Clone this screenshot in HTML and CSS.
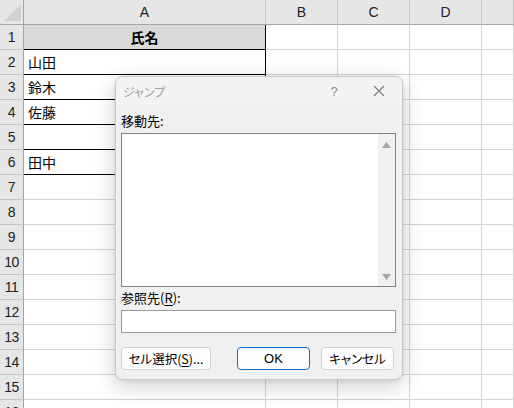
FILE: index.html
```html
<!DOCTYPE html>
<html lang="ja">
<head>
<meta charset="utf-8">
<title>ジャンプ</title>
<link rel="stylesheet" href="styles.css">
</head>
<body>
<div class="sheet">
  <div class="c h corner"></div><div class="c h">A</div><div class="c h">B</div><div class="c h">C</div><div class="c h">D</div><div class="c h"></div>
  <div class="c rh">1</div><div class="c t title-cell">氏名</div><div class="c"></div><div class="c"></div><div class="c"></div><div class="c"></div>
  <div class="c rh">2</div><div class="c t">山田</div><div class="c"></div><div class="c"></div><div class="c"></div><div class="c"></div>
  <div class="c rh">3</div><div class="c t">鈴木</div><div class="c"></div><div class="c"></div><div class="c"></div><div class="c"></div>
  <div class="c rh">4</div><div class="c t">佐藤</div><div class="c"></div><div class="c"></div><div class="c"></div><div class="c"></div>
  <div class="c rh">5</div><div class="c t"></div><div class="c"></div><div class="c"></div><div class="c"></div><div class="c"></div>
  <div class="c rh">6</div><div class="c t">田中</div><div class="c"></div><div class="c"></div><div class="c"></div><div class="c"></div>
  <div class="c rh">7</div><div class="c"></div><div class="c"></div><div class="c"></div><div class="c"></div><div class="c"></div>
  <div class="c rh">8</div><div class="c"></div><div class="c"></div><div class="c"></div><div class="c"></div><div class="c"></div>
  <div class="c rh">9</div><div class="c"></div><div class="c"></div><div class="c"></div><div class="c"></div><div class="c"></div>
  <div class="c rh">10</div><div class="c"></div><div class="c"></div><div class="c"></div><div class="c"></div><div class="c"></div>
  <div class="c rh">11</div><div class="c"></div><div class="c"></div><div class="c"></div><div class="c"></div><div class="c"></div>
  <div class="c rh">12</div><div class="c"></div><div class="c"></div><div class="c"></div><div class="c"></div><div class="c"></div>
  <div class="c rh">13</div><div class="c"></div><div class="c"></div><div class="c"></div><div class="c"></div><div class="c"></div>
  <div class="c rh">14</div><div class="c"></div><div class="c"></div><div class="c"></div><div class="c"></div><div class="c"></div>
  <div class="c rh">15</div><div class="c"></div><div class="c"></div><div class="c"></div><div class="c"></div><div class="c"></div>
  <div class="c rh">16</div><div class="c"></div><div class="c"></div><div class="c"></div><div class="c"></div><div class="c"></div>
</div>

<div class="dialog">
  <div class="dlg-title">
    <span class="dlg-name">ジャンプ</span>
    <span class="dlg-help">?</span>
    <span class="dlg-close">
      <svg width="12" height="12" viewBox="0 0 12 12"><path d="M1 1 L11 11 M11 1 L1 11" stroke="#7a7a7a" stroke-width="1.1" fill="none"/></svg>
    </span>
  </div>
  <div class="dlg-body">
    <div class="lbl lbl-first">移動先:</div>
    <div class="listbox">
      <div class="list-area"></div>
      <div class="vscroll">
        <svg width="9" height="6" viewBox="0 0 9 6"><path d="M4.5 0 L9 6 L0 6 Z" fill="#a6a6a6"/></svg>
        <svg width="9" height="6" viewBox="0 0 9 6"><path d="M0 0 L9 0 L4.5 6 Z" fill="#a6a6a6"/></svg>
      </div>
    </div>
    <div class="lbl">参照先(<u>R</u>):</div>
    <div class="input"></div>
    <div class="buttons">
      <div class="btn btn-cell">セル選択(<u>S</u>)...</div>
      <div class="btn btn-ok">OK</div>
      <div class="btn btn-cancel">キャンセル</div>
    </div>
  </div>
</div>
</body>
</html>
```

FILE: styles.css
```css
html, body {
  margin: 0;
  padding: 0;
  background: #ffffff;
  overflow: hidden;
}

body {
  width: 514px;
  height: 408px;
  position: relative;
  font-family: "Noto Sans CJK JP", "Noto Sans", sans-serif;
}

.sheet {
  display: grid;
  grid-template-columns: 24px 242px 72px 72px 72px 1fr;
  grid-auto-rows: 25px;
}

.c {
  box-sizing: border-box;
  border-right: 1px solid #d4d4d4;
  border-bottom: 1px solid #d4d4d4;
  font-size: 14px;
  line-height: 24px;
  padding-left: 4px;
  color: #000;
  white-space: nowrap;
  overflow: hidden;
}

.h {
  background: #e6e6e6;
  border-right-color: #c4c4c4;
  border-bottom-color: #a6a6a6;
  font-family: "Liberation Sans", Arial, sans-serif;
  text-align: center;
  padding-left: 0;
  color: #222;
  font-size: 14px;
}

.corner {
  position: relative;
  border-right-color: #a6a6a6;
}

.corner::after {
  content: "";
  position: absolute;
  left: 4px;
  top: 4px;
  width: 17px;
  height: 17px;
  background: #d2d2d2;
  clip-path: polygon(100% 0, 100% 100%, 0 100%);
}

.rh {
  background: #e6e6e6;
  border-right-color: #a6a6a6;
  border-bottom-color: #c4c4c4;
  font-family: "Liberation Sans", Arial, sans-serif;
  font-size: 14px;
  letter-spacing: -0.5px;
  text-align: center;
  padding-left: 0;
  color: #222;
}

.t {
  border-right-color: #000;
  border-bottom-color: #000;
}

.title-cell {
  background: #d9d9d9;
  font-weight: bold;
  text-align: center;
  padding-left: 0;
}

/* Dialog */
.dialog {
  position: absolute;
  left: 115px;
  top: 76px;
  width: 288px;
  height: 304px;
  box-sizing: border-box;
  border: 1px solid #c9c9c9;
  border-radius: 8px;
  background: #f0f0f0;
  box-shadow: 0 6px 22px rgba(0, 0, 0, 0.2), 0 1px 4px rgba(0, 0, 0, 0.08);
  overflow: hidden;
  display: flex;
  flex-direction: column;
  font-size: 13px;
  font-feature-settings: "palt";
}

.dlg-title {
  height: 28px;
  background: #f3f3f3;
  display: flex;
  align-items: center;
  padding: 0 13px 0 7px;
}

.dlg-name {
  flex: 1;
  font-size: 12px;
  color: #a0a0a0;
}

.dlg-help {
  width: 20px;
  text-align: center;
  font-family: "Liberation Sans", Arial, sans-serif;
  font-size: 13px;
  color: #8a8a8a;
  margin-right: 25px;
}

.dlg-close {
  width: 20px;
  display: flex;
  justify-content: center;
  align-items: center;
}

.dlg-body {
  flex: 1;
  padding: 0 6px 0 5px;
  display: flex;
  flex-direction: column;
}

.lbl {
  height: 18px;
  line-height: 18px;
  margin-top: 2px;
  color: #000;
}

.lbl-first {
  margin-top: 7px;
}

.lbl u {
  text-underline-offset: 2px;
}

.listbox {
  margin-top: 3px;
  height: 154px;
  box-sizing: border-box;
  border: 1px solid #828282;
  background: #ffffff;
  display: flex;
}

.list-area {
  flex: 1;
}

.vscroll {
  width: 17px;
  background: #f0f0f0;
  display: flex;
  flex-direction: column;
  align-items: center;
  justify-content: space-between;
  padding: 8px 0 6px;
}

.input {
  margin-top: 3px;
  height: 23px;
  box-sizing: border-box;
  border: 1px solid #9a9a9a;
  background: #ffffff;
}

.buttons {
  margin-top: 14px;
  display: flex;
  padding-right: 2px;
}

.btn {
  height: 23px;
  box-sizing: border-box;
  border: 1px solid #d0d0d0;
  border-radius: 4px;
  background: #fdfdfd;
  display: flex;
  align-items: center;
  justify-content: center;
  color: #000;
  font-size: 12.5px;
}

.btn-cell {
  width: 90px;
}

.btn-cell u {
  text-underline-offset: 2px;
}

.btn-ok {
  width: 73px;
  margin-left: auto;
  border: 1.5px solid #1a6fc4;
  font-family: "Liberation Sans", Arial, sans-serif;
  font-size: 13px;
}

.btn-cancel {
  width: 73px;
  margin-left: 11px;
}
```
